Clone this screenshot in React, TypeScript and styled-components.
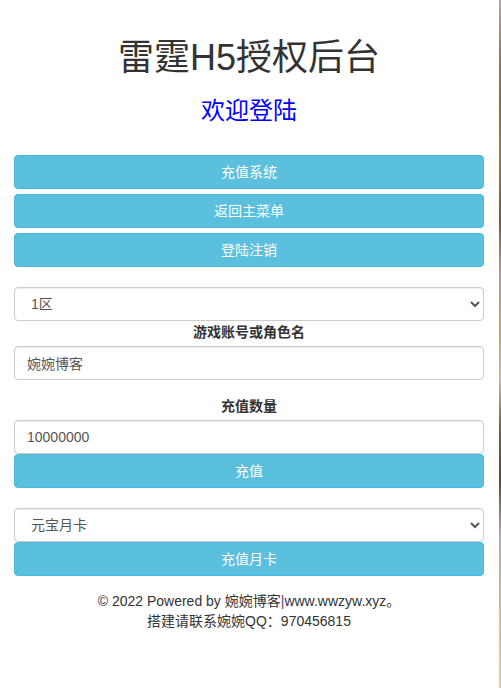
import React from "react";
import styled, { createGlobalStyle } from "styled-components";

const GlobalStyle = createGlobalStyle`
  html, body { margin: 0; padding: 0; background: #fff; }
  body {
    font-family: "Liberation Sans", "Noto Sans CJK SC", sans-serif;
    font-size: 14px;
    line-height: 1.42857;
    color: #333;
  }
  * { box-sizing: border-box; }
`;

const Shell = styled.div`
  display: flex;
  width: 501px;
  min-height: 688px;
`;

const Page = styled.main`
  width: 499px;
  padding: 0 15px 0 14px;
  display: flex;
  flex-direction: column;
`;

const EdgeStrip = styled.div`
  width: 2px;
  background: linear-gradient(
    to bottom,
    #b9a2a8 0%,
    #9a7a5a 8%,
    #8a6a3c 15%,
    #a07a48 22%,
    #7a5a36 32%,
    #b89aa0 40%,
    #c0a46a 48%,
    #d2b8a8 55%,
    #7a6048 62%,
    #5e4a3a 70%,
    #b8a8b8 78%,
    #c8c090 88%,
    #d8d0a0 100%
  );
`;

const Title = styled.h1`
  margin: 38px 0 0;
  font-size: 36px;
  font-weight: 400;
  line-height: 1.1;
  text-align: center;
  color: #333;
`;

const Subtitle = styled.h3`
  margin: 20px 0 0;
  font-size: 24px;
  font-weight: 400;
  line-height: 1.1;
  text-align: center;
  color: #0000ff;
`;

const ButtonStack = styled.div`
  display: flex;
  flex-direction: column;
  gap: 5px;
  margin-top: 31px;
`;

const InfoButton = styled.button<{ $top?: number }>`
  display: block;
  width: 100%;
  height: 34px;
  margin-top: ${(p) => p.$top ?? 0}px;
  padding: 6px 12px;
  font-family: inherit;
  font-size: 14px;
  line-height: 20px;
  color: #fff;
  background: #5bc0de;
  border: 1px solid #46b8da;
  border-radius: 4px;
  text-align: center;
  cursor: pointer;
`;

const Select = styled.select<{ $top?: number }>`
  display: block;
  width: 100%;
  height: 34px;
  margin-top: ${(p) => p.$top ?? 0}px;
  padding: 6px 12px;
  font-family: inherit;
  font-size: 14px;
  color: #555;
  background: #fff;
  border: 1px solid #ccc;
  border-radius: 4px;
  box-shadow: inset 0 1px 1px rgba(0, 0, 0, 0.075);
`;

const Input = styled.input`
  display: block;
  width: 100%;
  height: 34px;
  padding: 6px 12px;
  font-family: inherit;
  font-size: 14px;
  color: #555;
  background: #fff;
  border: 1px solid #ccc;
  border-radius: 4px;
  box-shadow: inset 0 1px 1px rgba(0, 0, 0, 0.075);
`;

const Label = styled.label<{ $top?: number }>`
  display: block;
  margin: ${(p) => p.$top ?? 0}px 0 4px;
  font-weight: 700;
  font-size: 14px;
  line-height: 20px;
  text-align: center;
  color: #333;
`;

const Footer = styled.footer`
  margin-top: 15px;
  text-align: center;
  font-size: 14px;
  line-height: 20px;
  color: #333;
`;

const Pipe = styled.span`
  color: #6b3f7a;
`;

export default function App() {
  return (
    <>
      <GlobalStyle />
      <Shell>
        <Page>
          <Title>雷霆H5授权后台</Title>
          <Subtitle>欢迎登陆</Subtitle>
          <ButtonStack>
            <InfoButton>充值系统</InfoButton>
            <InfoButton>返回主菜单</InfoButton>
            <InfoButton>登陆注销</InfoButton>
          </ButtonStack>

          <Select $top={20} defaultValue="1">
            <option value="1">1区</option>
          </Select>
          <Label $top={1}>游戏账号或角色名</Label>
          <Input defaultValue="婉婉博客" />

          <Label $top={16}>充值数量</Label>
          <Input defaultValue="10000000" />
          <InfoButton>充值</InfoButton>

          <Select $top={20} defaultValue="yb">
            <option value="yb">元宝月卡</option>
          </Select>
          <InfoButton>充值月卡</InfoButton>

          <Footer>
            © 2022 Powered by 婉婉博客<Pipe>|</Pipe>www.wwzyw.xyz。
            <br />
            搭建请联系婉婉QQ：970456815
          </Footer>
        </Page>
        <EdgeStrip />
      </Shell>
    </>
  );
}
